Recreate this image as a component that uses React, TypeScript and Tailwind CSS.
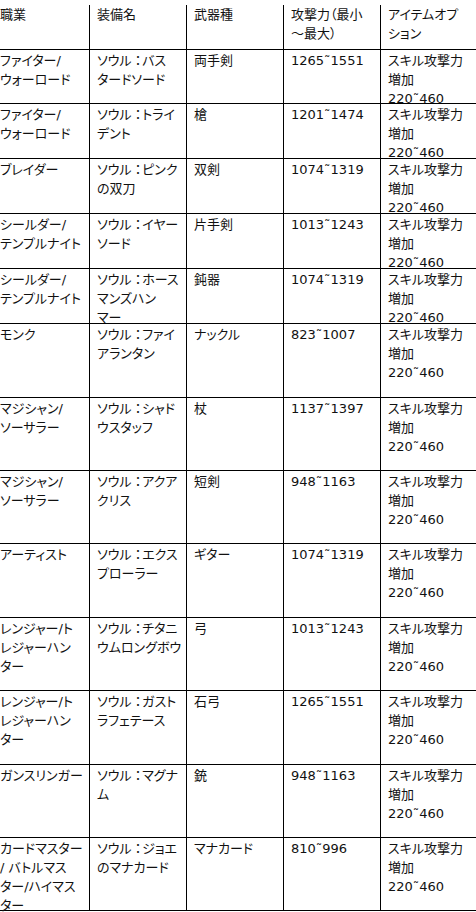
import React from 'react';

type Row = { job: string[]; name: string[]; weapon: string; atk: string; h: string };

const rows: Row[] = [
  { job: ['ファイター/', 'ウォーロード'], name: ['バス', 'タードソード'], weapon: '両手剣', atk: '1265˜1551', h: 'h-[54px]' },
  { job: ['ファイター/', 'ウォーロード'], name: ['トライ', 'デント'], weapon: '槍', atk: '1201˜1474', h: 'h-[55px]' },
  { job: ['ブレイダー'], name: ['ピンク', 'の双刀'], weapon: '双剣', atk: '1074˜1319', h: 'h-[55px]' },
  { job: ['シールダー/', 'テンプルナイト'], name: ['イヤー', 'ソード'], weapon: '片手剣', atk: '1013˜1243', h: 'h-[55px]' },
  { job: ['シールダー/', 'テンプルナイト'], name: ['ホース', 'マンズハン', 'マー'], weapon: '鈍器', atk: '1074˜1319', h: 'h-[55px]' },
  { job: ['モンク'], name: ['ファイ', 'アランタン'], weapon: 'ナックル', atk: '823˜1007', h: 'h-[74px]' },
  { job: ['マジシャン/', 'ソーサラー'], name: ['シャド', 'ウスタッフ'], weapon: '杖', atk: '1137˜1397', h: 'h-[73px]' },
  { job: ['マジシャン/', 'ソーサラー'], name: ['アクア', 'クリス'], weapon: '短剣', atk: '948˜1163', h: 'h-[73px]' },
  { job: ['アーティスト'], name: ['エクス', 'プローラー'], weapon: 'ギター', atk: '1074˜1319', h: 'h-[74px]' },
  { job: ['レンジャー/ト', 'レジャーハン', 'ター'], name: ['チタニ', 'ウムロングボウ'], weapon: '弓', atk: '1013˜1243', h: 'h-[73px]' },
  { job: ['レンジャー/ト', 'レジャーハン', 'ター'], name: ['ガスト', 'ラフェテース'], weapon: '石弓', atk: '1265˜1551', h: 'h-[74px]' },
  { job: ['ガンスリンガー'], name: ['マグナ', 'ム'], weapon: '銃', atk: '948˜1163', h: 'h-[73px]' },
  { job: ['カードマスター', '/ バトルマス', 'ター/ハイマス', 'ター'], name: ['ジョエ', 'のマナカード'], weapon: 'マナカード', atk: '810˜996', h: 'h-[73px]' },
];

function Lines({ items }: { items: string[] }) {
  return (
    <>
      {items.map((t, i) => (
        <div key={i} className="whitespace-nowrap">{t}</div>
      ))}
    </>
  );
}

// first line of the 装備名 column carries the colon
function NameCell({ name }: { name: string[] }) {
  return (
    <>
      <div className="whitespace-nowrap">
        ソウル<span className="ml-[3px] mr-[1px]">：</span>{name[0]}
      </div>
      {name.slice(1).map((t, i) => (
        <div key={i} className="whitespace-nowrap">{t}</div>
      ))}
    </>
  );
}

const cell = 'shrink-0 w-[97px] border-l border-black pl-[7px] whitespace-nowrap';

export default function App() {
  return (
    <div className="w-[476px] h-[912px] overflow-hidden bg-white">
      <div className="ml-[-8px] w-[484px] flex flex-col text-[13px] leading-[19px] text-[#111] font-['DejaVu_Sans','Noto_Sans_CJK_JP',sans-serif] [font-feature-settings:'palt']">
        <div className="flex h-[50px] border-b border-black pt-[5px]">
          <div className={`${cell} w-[96px]`}>職業</div>
          <div className={cell}>装備名</div>
          <div className={cell}>武器種</div>
          <div className={cell}>
            <Lines items={['攻撃力（最小', '〜最大）']} />
          </div>
          <div className={`${cell} border-r`}>
            <Lines items={['アイテムオプ', 'ション']} />
          </div>
        </div>
        {rows.map((r, i) => (
          <div key={i} className={`flex border-b border-black ${r.h}`}>
            <div className={`${cell} w-[96px] pt-[1px]`}><Lines items={r.job} /></div>
            <div className={`${cell} pt-[1px]`}><NameCell name={r.name} /></div>
            <div className={`${cell} pt-[1px]`}>{r.weapon}</div>
            <div className={`${cell} pt-[1px]`}>{r.atk}</div>
            <div className={`${cell} border-r pt-[1px]`}>
              <Lines items={['スキル攻撃力', '増加', '220˜460']} />
            </div>
          </div>
        ))}
      </div>
    </div>
  );
}
